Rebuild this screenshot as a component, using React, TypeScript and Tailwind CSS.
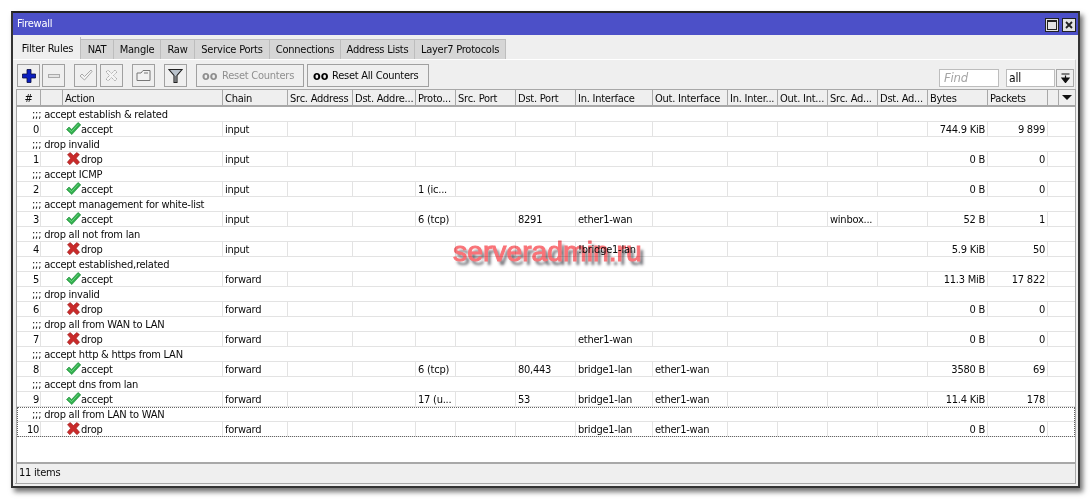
import React from "react";

const cols = "grid-cols-[24px_22px_160px_65px_65px_63px_40px_60px_60px_77px_75px_50px_50px_50px_50px_60px_60px_11px_16px]";

type R = {
  c: string;
  n: number;
  a: "accept" | "drop";
  chain: string;
  proto?: string;
  dport?: string;
  inI?: string;
  outI?: string;
  src?: string;
  bytes: string;
  pk: string;
};

const rows: R[] = [
  { c: ";;; accept establish & related", n: 0, a: "accept", chain: "input", bytes: "744.9 KiB", pk: "9 899" },
  { c: ";;; drop invalid", n: 1, a: "drop", chain: "input", bytes: "0 B", pk: "0" },
  { c: ";;; accept ICMP", n: 2, a: "accept", chain: "input", proto: "1 (ic...", bytes: "0 B", pk: "0" },
  { c: ";;; accept management for white-list", n: 3, a: "accept", chain: "input", proto: "6 (tcp)", dport: "8291", inI: "ether1-wan", src: "winbox...", bytes: "52 B", pk: "1" },
  { c: ";;; drop all not from lan", n: 4, a: "drop", chain: "input", inI: "!bridge1-lan", bytes: "5.9 KiB", pk: "50" },
  { c: ";;; accept established,related", n: 5, a: "accept", chain: "forward", bytes: "11.3 MiB", pk: "17 822" },
  { c: ";;; drop invalid", n: 6, a: "drop", chain: "forward", bytes: "0 B", pk: "0" },
  { c: ";;; drop all from WAN to LAN", n: 7, a: "drop", chain: "forward", inI: "ether1-wan", bytes: "0 B", pk: "0" },
  { c: ";;; accept http & https from LAN", n: 8, a: "accept", chain: "forward", proto: "6 (tcp)", dport: "80,443", inI: "bridge1-lan", outI: "ether1-wan", bytes: "3580 B", pk: "69" },
  { c: ";;; accept dns from lan", n: 9, a: "accept", chain: "forward", proto: "17 (u...", dport: "53", inI: "bridge1-lan", outI: "ether1-wan", bytes: "11.4 KiB", pk: "178" },
];

const last: R = { c: ";;; drop all from LAN to WAN", n: 10, a: "drop", chain: "forward", inI: "bridge1-lan", outI: "ether1-wan", bytes: "0 B", pk: "0" };

const heads = ["#", "", "Action", "Chain", "Src. Address", "Dst. Addre...", "Proto...", "Src. Port", "Dst. Port", "In. Interface", "Out. Interface", "In. Inter...", "Out. Int...", "Src. Ad...", "Dst. Ad...", "Bytes", "Packets", ""];

function Check() {
  return (
    <svg width="15" height="13" viewBox="0 0 15 13" className="shrink-0">
      <path d="M0.5 7.5 L3 5 L5.6 7.4 L12 0.5 L14.8 2.8 L5.8 12.6 Z" fill="#2fae4c" stroke="#1d8a36" strokeWidth="0.6" />
      <path d="M2.5 7 L5.6 9.6 L12.4 2.2" fill="none" stroke="#7fdc8e" strokeWidth="0.8" />
    </svg>
  );
}

function Cross() {
  return (
    <svg width="15" height="13" viewBox="0 0 15 13" className="shrink-0">
      <path d="M1.5 2.6 L4.3 0.5 L7.4 3.6 L10.8 0.5 L13.4 2.6 L10.2 6.3 L13.6 10.3 L10.9 12.7 L7.4 9.1 L3.9 12.7 L1.3 10.3 L4.6 6.3 Z" fill="#c92b2b" stroke="#9c1f1f" strokeWidth="0.6" />
    </svg>
  );
}

function Cell({ children, right }: { children?: React.ReactNode; right?: boolean }) {
  return (
    <div className={`h-[15px] border-r border-b border-[#e3e3e3] px-[2px] leading-[16px] whitespace-nowrap overflow-hidden ${right ? "text-right" : ""}`}>
      {children}
    </div>
  );
}

function Row({ r }: { r: R }) {
  return (
    <>
      <div className="h-[15px] pl-[15px] leading-[16px] whitespace-nowrap border-b border-[#e3e3e3]">{r.c}</div>
      <div className={`grid ${cols}`}>
        <div className="h-[15px] border-r border-b border-[#e3e3e3] pr-[1px] text-right leading-[16px] overflow-hidden">{r.n}</div>
        <Cell />
        <div className="h-[15px] border-r border-b border-[#e3e3e3] flex items-start pl-[3px] leading-[16px] overflow-hidden">
          {r.a === "accept" ? <Check /> : <Cross />}
          <span>{r.a}</span>
        </div>
        <Cell>{r.chain}</Cell>
        <Cell />
        <Cell />
        <Cell>{r.proto}</Cell>
        <Cell />
        <Cell>{r.dport}</Cell>
        <Cell>{r.inI}</Cell>
        <Cell>{r.outI}</Cell>
        <Cell />
        <Cell />
        <Cell>{r.src}</Cell>
        <Cell />
        <Cell right>{r.bytes}</Cell>
        <Cell right>{r.pk}</Cell>
        <div className="col-span-2 h-[15px] border-b border-[#e3e3e3]" />
      </div>
    </>
  );
}

function ToolBtn({ children }: { children: React.ReactNode }) {
  return <div className="w-[23px] h-[23px] border border-[#a0a0a0] bg-[#efefef] flex items-center justify-center shrink-0">{children}</div>;
}

function Tab({ label, w, active }: { label: string; w: string; active?: boolean }) {
  return active ? (
    <div className={`${w} h-[22px] -mt-[2px] bg-[#efefef] border-r border-[#bdbdbd] flex items-center justify-center leading-none`}>{label}</div>
  ) : (
    <div className={`${w} h-[20px] bg-[#d6d6d6] border-r border-t border-[#bdbdbd] flex items-center justify-center leading-none`}>{label}</div>
  );
}

export default function App() {
  return (
    <div className="w-[1092px] h-[500px] bg-white pt-[11px] pl-[11px] text-[11px] tracking-[-0.24px] text-[#0a0a0a] font-['DejaVu_Sans_Condensed','DejaVu_Sans',sans-serif] [font-stretch:condensed] overflow-hidden">
      <div className="relative w-[1069px] h-[477px] border-2 border-[#333] border-t-[#222] bg-[#efefef] flex flex-col shadow-[3px_4px_5px_rgba(0,0,0,0.55)]">
        {/* Title bar */}
        <div className="h-[22px] bg-[#4c50c8] text-white flex items-center pl-[4px] pr-[2px] shrink-0">
          <span className="flex-1">Firewall</span>
          <div className="w-[14px] h-[14px] mt-[2px] bg-[#e3e3e3] border border-[#222] flex items-center justify-center mr-[3px]">
            <div className="w-[10px] h-[10px] border border-[#222] border-t-2" />
          </div>
          <div className="w-[14px] h-[14px] mt-[2px] bg-[#e3e3e3] border border-[#222] flex items-center justify-center">
            <svg width="8" height="8" viewBox="0 0 8 8"><path d="M1 1 L7 7 M7 1 L1 7" stroke="#222" strokeWidth="1.8" /></svg>
          </div>
        </div>

        {/* Tabs */}
        <div className="h-[24px] pl-[2px] pt-[4px] flex items-start shrink-0">
          <Tab label="Filter Rules" w="w-[66px]" active />
          <Tab label="NAT" w="w-[33px]" />
          <Tab label="Mangle" w="w-[47px]" />
          <Tab label="Raw" w="w-[34px]" />
          <Tab label="Service Ports" w="w-[75px]" />
          <Tab label="Connections" w="w-[71px]" />
          <Tab label="Address Lists" w="w-[74px]" />
          <Tab label="Layer7 Protocols" w="w-[91px]" />
        </div>

        {/* Toolbar */}
        <div className="h-[30px] pl-[4px] pr-[1px] pt-[4px] flex items-start shrink-0 border-r border-t border-t-white border-r-[#d0d0d0] mr-[2px]">
          <ToolBtn>
            <svg width="14" height="14" viewBox="0 0 14 14"><path d="M5 0.5 H9 V5 H13.5 V9 H9 V13.5 H5 V9 H0.5 V5 H5 Z" fill="#0a1ec0" stroke="#050a40" strokeWidth="0.8" /></svg>
          </ToolBtn>
          <div className="w-[2px] shrink-0" />
          <ToolBtn>
            <div className="w-[12px] h-[4px] border border-[#aaa] bg-[#e4e4e4]" />
          </ToolBtn>
          <div className="w-[9px] shrink-0" />
          <ToolBtn>
            <svg width="14" height="13" viewBox="0 0 14 13"><path d="M1 7 L3 5 L5.5 7.5 L12 1 L13 2.5 L5.5 11 Z" fill="#f4f4f4" stroke="#a8a8a8" /></svg>
          </ToolBtn>
          <div className="w-[3px] shrink-0" />
          <ToolBtn>
            <svg width="13" height="13" viewBox="0 0 13 13"><path d="M1 3 L3 1 L6.5 4.5 L10 1 L12 3 L8.5 6.5 L12 10 L10 12 L6.5 8.5 L3 12 L1 10 L4.5 6.5 Z" fill="#f4f4f4" stroke="#a8a8a8" strokeDasharray="1.5 0.7" /></svg>
          </ToolBtn>
          <div className="w-[9px] shrink-0" />
          <ToolBtn>
            <svg width="15" height="13" viewBox="0 0 15 13"><path d="M1 4 H5 L7 1.5 H14 V11.5 H1 Z" fill="#f2f2f2" stroke="#777" /><path d="M8 4 H12" stroke="#777" /></svg>
          </ToolBtn>
          <div className="w-[9px] shrink-0" />
          <ToolBtn>
            <svg width="15" height="16" viewBox="0 0 15 16"><path d="M1 1.5 H14 L9 7.5 V14.5 H6 V7.5 Z" fill="#b9c2cc" stroke="#222" strokeWidth="1.1" /><path d="M7.5 8 V14" stroke="#777" /></svg>
          </ToolBtn>
          <div className="w-[9px] shrink-0" />
          <div className="w-[108px] h-[23px] border border-[#a0a0a0] bg-[#efefef] flex items-center pl-[5px] pt-px text-[#8f8f8f] shrink-0">
            <span className="font-bold text-[12.5px] w-[20px] tracking-normal">oo</span>Reset Counters
          </div>
          <div className="w-[3px] shrink-0" />
          <div className="w-[122px] h-[23px] border border-[#a0a0a0] bg-[#efefef] flex items-center pl-[5px] pt-px shrink-0">
            <span className="font-bold text-[12.5px] w-[19px] tracking-normal text-black">oo</span>Reset All Counters
          </div>
          <div className="flex-1" />
          <div className="w-[60px] h-[18px] mt-[5px] border border-[#bdbdbd] bg-white flex items-center pl-[4px] italic text-[#a5a5a5] text-[13px]">Find</div>
          <div className="w-[7px] shrink-0" />
          <div className="w-[49px] h-[18px] mt-[5px] border border-[#bdbdbd] bg-white flex items-center pl-[2px] text-[12px]">all</div>
          <div className="w-px shrink-0" />
          <div className="w-[18px] h-[18px] mt-[5px] border border-[#a8a8a8] bg-[#efefef] flex items-center justify-center">
            <svg width="9" height="10" viewBox="0 0 9 10"><path d="M0.5 1 H8.5 M4.5 2.5 V9 M1 5 H8 L4.5 9.5 Z" stroke="#111" strokeWidth="1.2" fill="#111" /></svg>
          </div>
        </div>

        {/* Table */}
        <div className="flex-1 ml-[3px] mr-[2px] min-h-0 flex flex-col border-x border-[#a8a8a8]">
          <div className="flex-1 bg-white min-h-0 flex flex-col">
            <div className={`grid ${cols} h-[18px] bg-[#efefef] border-t border-b-2 border-[#a8a8a8] shrink-0`}>
              {heads.map((h, i) => (
                <div key={i} className={`border-r border-[#a8a8a8] px-[2px] leading-[17px] whitespace-nowrap overflow-hidden ${i === 0 ? "text-center" : ""}`}>
                  {h}
                </div>
              ))}
              <div className="flex items-center justify-center">
                <div className="w-0 h-0 border-l-[5px] border-r-[5px] border-t-[5px] border-l-transparent border-r-transparent border-t-[#111]" />
              </div>
            </div>
            {rows.map((r) => (
              <Row key={r.n} r={r} />
            ))}
            <div className="outline-1 outline-dotted outline-[#666] -outline-offset-1">
              <Row r={last} />
            </div>
          </div>
          <div className="h-[21px] shrink-0 border-t-2 border-[#a8a8a8] flex items-center pl-[2px]">11 items</div>
        </div>
        <div className="h-[3px] shrink-0 border-t border-[#a8a8a8] mx-[2px]" />

        {/* Watermark */}
        <div className="absolute left-[440px] top-[224px] text-[28.3px] tracking-normal leading-none font-['Liberation_Sans',sans-serif] text-[#f97378] [-webkit-text-stroke:1px_#f97378] mix-blend-multiply [text-shadow:3px_4px_3px_rgba(40,40,50,0.75)] whitespace-nowrap">
          serveradmin.ru
        </div>
      </div>
    </div>
  );
}
